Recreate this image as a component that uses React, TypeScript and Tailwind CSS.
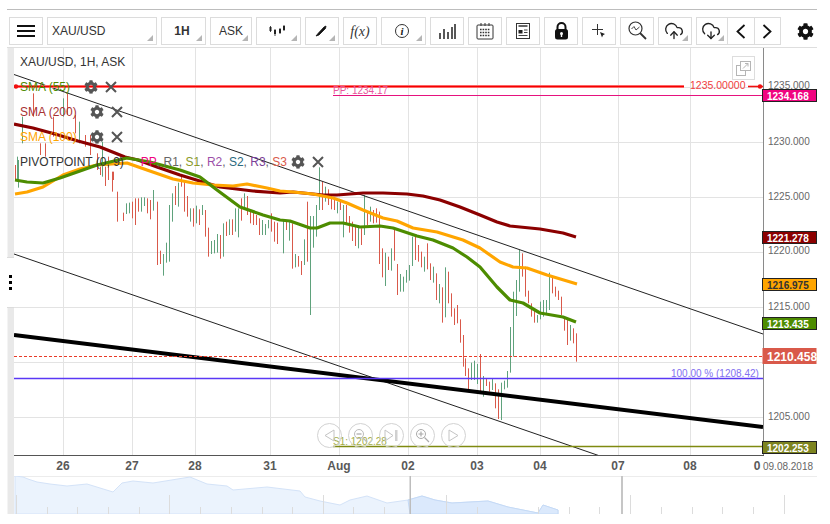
import React from "react";
import { FaCog } from "react-icons/fa";
import { CloudUpload, CloudDownload } from "lucide-react";

type C = [number, number, number, "g" | "r"];
const GREEN = "#5fa27c";
const RED = "#d9594a";

const zoomA: C[] = [[50,470,540,"g"],[65,350,430,"g"],[100,280,350,"r"],[120,430,465,"r"],[135,430,470,"r"],[160,350,410,"r"],[190,295,350,"g"],[200,280,345,"r"],[225,345,400,"r"],[237,365,430,"g"],[255,405,440,"r"],[270,405,465,"r"],[290,460,510,"r"],[305,425,490,"g"],[325,470,540,"r"],[340,515,540,"r"]];
const zoomB: C[] = [[45,15,60,"r"],[55,0,83,"g"],[300,20,45,"r"],[307,10,50,"g"],[316,20,78,"r"],[335,35,95,"r"],[352,95,185,"r"],[370,158,183,"r"],[379,130,162,"g"],[388,128,160,"g"],[397,125,175,"r"],[406,115,195,"r"],[415,115,155,"r"],[424,112,155,"g"],[433,112,138,"g"],[442,115,160,"r"],[451,120,178,"r"],[460,90,152,"g"],[470,125,315,"r"],[479,272,312,"r"],[488,282,347,"g"],[497,248,308,"g"],[506,135,305,"g"],[515,100,185,"g"],[524,78,135,"r"],[533,68,140,"g"],[542,45,80,"r"],[551,60,155,"r"],[560,108,170,"r"],[569,145,185,"g"],[578,145,200,"r"],[587,137,190,"g"],[596,148,195,"r"],[605,135,165,"g"],[614,150,230,"r"],[623,203,290,"r"],[632,243,282,"g"],[641,240,280,"g"],[650,222,278,"g"],[659,225,296,"r"],[668,190,290,"g"],[677,185,228,"r"],[686,178,225,"g"],[695,178,225,"r"],[704,145,215,"g"],[713,145,232,"g"],[722,115,182,"r"],[731,100,145,"g"],[740,108,165,"r"],[749,150,190,"r"],[758,155,195,"r"],[767,165,195,"r"],[776,175,225,"r"],[785,180,225,"g"],[794,192,225,"g"],[803,180,205,"g"],[812,160,215,"r"],[821,185,245,"r"],[830,188,252,"r"]];
const zoomC: C[] = [[8,182,280,"g"],[17,180,210,"r"],[26,180,242,"g"],[35,190,326,"r"],[44,282,322,"g"],[53,288,320,"r"],[62,303,345,"r"],[71,238,315,"g"],[80,125,305,"r"],[89,168,465,"g"],[98,168,263,"g"],[107,135,230,"g"],[116,22,150,"g"],[125,65,150,"r"],[134,80,125,"g"],[143,88,135,"r"],[152,105,148,"r"],[161,120,150,"r"],[170,125,160,"g"],[179,125,150,"r"],[188,135,232,"g"],[197,135,190,"r"],[206,168,218,"r"],[215,185,243,"r"],[224,200,258,"r"],[233,195,265,"g"],[242,205,255,"r"],[251,105,225,"g"],[260,155,195,"r"],[269,140,185,"g"],[278,150,190,"r"],[287,145,188,"r"],[296,155,312,"r"],[305,265,352,"r"],[314,278,378,"g"],[323,290,330,"r"],[332,265,332,"g"],[341,208,302,"r"],[350,312,405,"r"],[359,342,395,"g"],[368,350,395,"g"],[377,330,368,"g"],[386,315,362,"g"],[395,230,318,"g"],[404,225,300,"r"],[413,255,305,"r"],[422,275,322,"r"],[431,290,335,"g"],[440,250,328,"r"],[449,310,360,"r"],[458,320,368,"g"],[467,340,420,"r"],[476,372,430,"g"],[485,382,488,"r"],[494,322,472,"g"],[503,335,430,"r"],[512,400,470,"r"],[521,445,495,"r"],[530,435,490,"r"],[539,478,548,"r"],[548,525,620,"r"],[700,395,590,"g"],[709,360,468,"g"],[718,270,395,"g"],[727,280,350,"r"],[736,320,410,"r"],[745,392,430,"r"],[754,430,470,"r"],[763,450,488,"r"],[772,465,488,"g"],[781,425,478,"g"],[790,420,470,"g"],[799,420,465,"g"],[808,338,450,"g"],[817,350,400,"r"],[826,380,410,"r"],[835,392,420,"r"],[844,410,465,"r"],[853,468,512,"r"],[862,475,555,"r"],[871,495,542,"g"],[880,505,550,"r"],[889,520,605,"r"]];
const zoomD: C[] = [[46,55,108,"r"],[55,85,150,"r"],[64,68,120,"g"],[73,62,120,"g"],[82,72,132,"g"],[91,42,160,"r"],[100,108,170,"g"],[109,115,138,"r"],[118,125,155,"r"],[127,115,150,"g"],[136,130,205,"r"],[145,148,237,"r"],[154,128,240,"g"],[163,122,148,"g"],[172,93,143,"g"],[181,-39,98,"g"]];

const candles = [
  ...zoomA.map(([z, t, b, c]) => ({ x: z / 3, t: t / 3, b: b / 3, c })),
  ...zoomB.map(([z, t, b, c]) => ({ x: z / 3, t: 160 + t / 3, b: 160 + b / 3, c })),
  ...zoomC.map(([z, t, b, c]) => ({ x: 280 + z / 3, t: 160 + t / 3, b: 160 + b / 3, c })),
  ...zoomD.map(([z, t, b, c]) => ({ x: 450 + z / 3, t: 340 + t / 3, b: 340 + b / 3, c })),
];

const sma200 = "14,124 33,128 55,134 78,141 100,147 125,157 138,160 157,167 180,175 203,182 220,187 253,191 280,193 293,192 323,195 337,195 363,193 383,193 407,194 423,196 440,200 460,207 480,215 497,222 510,226 540,229 563,233 576,237";
const sma100 = "15,194 27,192 43,187 63,175 80,169 97,165 127,163 147,170 173,179 193,183 213,185 233,186 247,184 267,188 280,191 293,192 313,194 333,198 347,203 363,210 383,218 397,221 413,228 437,232 463,240 480,248 500,262 513,267 527,268 547,275 577,284";
const sma55 = "15,180 27,182 43,183 60,178 80,171 97,165 127,158 150,162 180,170 200,177 217,190 240,207 263,215 280,220 290,221 310,228 317,228 330,223 343,223 360,227 380,226 393,228 417,236 433,240 453,248 467,257 480,267 497,287 510,300 523,303 540,313 563,317 576,322";

const vGrid = [63, 132, 195, 270, 339, 408, 477, 540, 618, 690];
const hGrid = [87, 142, 197, 252, 307, 362, 417];
const priceLabels: [string, number][] = [["1235.000", 88.5], ["1230.000", 144.5], ["1225.000", 199.5], ["1220.000", 254], ["1215.000", 309.5], ["1205.000", 419.5]];
const dates: [string, number][] = [["26", 63], ["27", 132], ["28", 195], ["31", 270], ["Aug", 339], ["02", 408], ["03", 477], ["04", 540], ["07", 618], ["08", 690], ["0", 757]];

type Badge = { text: string; y: number; h: number; bg: string; fg: string; size: number; border: boolean };
const badges: Badge[] = [
  { text: "1234.168", y: 89.5, h: 12, bg: "#f0047f", fg: "#fff", size: 10, border: true },
  { text: "1221.278", y: 231.5, h: 12, bg: "#8b0000", fg: "#fff", size: 10, border: true },
  { text: "1216.975", y: 278.5, h: 12, bg: "#ffa500", fg: "#333", size: 10, border: true },
  { text: "1213.435", y: 317.5, h: 12, bg: "#4d8c00", fg: "#fff", size: 10, border: true },
  { text: "1210.458", y: 348, h: 16, bg: "#d9594a", fg: "#fff", size: 12, border: false },
  { text: "1202.253", y: 441.5, h: 12, bg: "#7d8420", fg: "#fff", size: 10, border: true },
];

const navProfile = [[15,476],[23,477],[28,479],[37,482],[50,484],[67,486],[87,484],[113,492],[122,483],[133,481],[153,483],[190,477],[207,484],[227,486],[233,490],[267,487],[300,491],[305,497],[320,501],[340,505],[350,500],[367,496],[387,503],[408,500],[422,496],[435,500],[452,503],[488,501],[508,507],[538,513],[543,505],[558,510]];
const navTicks: [number, number][] = [[16,495],[47,507],[77,507],[108,507],[139,507],[169,495],[200,507],[231,507],[262,507],[292,507],[323,495],[353,507],[384,507],[446,495],[477,507],[538,507],[569,507],[599,507],[630,495],[661,507],[692,507],[722,507],[753,507],[784,495]];

function Caret() {
  return <span className="absolute right-[3px] bottom-[3px] w-0 h-0 border-l-[6px] border-l-transparent border-b-[6px] border-b-[#b5b5b5]" />;
}

function Btn({ w, caret, children, className = "" }: { w: string; caret?: boolean; children: React.ReactNode; className?: string }) {
  return (
    <div className={`relative flex items-center justify-center h-[28px] border border-[#dcdcdc] shrink-0 ${w} ${className}`}>
      {children}
      {caret && <Caret />}
    </div>
  );
}

function Times({ size = 12 }: { size?: number }) {
  return (
    <svg width={size} height={size} viewBox="0 0 12 12" className="block">
      <path d="M1 1L11 11M11 1L1 11" stroke="#555" strokeWidth="2" />
    </svg>
  );
}

function Controls({ left }: { left: string }) {
  return (
    <span className={`flex items-center gap-[7px] ${left}`}>
      <FaCog size={14} color="#555" />
      <Times />
    </span>
  );
}

function RoundBtn({ children }: { children: React.ReactNode }) {
  return <div className="w-[25px] h-[25px] rounded-full border border-[#d2d2d2] flex items-center justify-center">{children}</div>;
}

export default function App() {
  const selected = navProfile.filter((p) => p[0] >= 408).map((p) => p.join(" ")).join(" L");
  return (
    <div className="relative w-[830px] h-[524px] bg-white overflow-hidden font-['Liberation_Sans',Arial,sans-serif]">
      <div className="mt-[9px] ml-[7px] w-[810px] h-px bg-[#bdbdbd]" />

      <div className="mt-[7px] ml-[9px] flex items-center gap-1 text-[#222]">
        <Btn w="w-[34px]">
          <svg width="18" height="12" viewBox="0 0 18 12"><path d="M0 1H18M0 6H18M0 11H18" stroke="#111" strokeWidth="1.8" /></svg>
        </Btn>
        <Btn w="w-[110px]" caret className="justify-start pl-[4px] text-[12px] text-[#333]">XAU/USD</Btn>
        <Btn w="w-[45px]" caret className="text-[12px] font-bold text-[#333] pr-[3px]">1H</Btn>
        <Btn w="w-[42px]" caret className="text-[12px] text-[#333]">ASK</Btn>
        <Btn w="w-[45px]" caret className="pr-[4px]">
          <svg width="18" height="12" viewBox="0 0 18 12"><path d="M2.5 1V7M7 4V11M12 3V9M16 0V6" stroke="#444" strokeWidth="1" /><path d="M2.5 2V6M7 5V9M12 4V8M16 1V5" stroke="#222" strokeWidth="2" /></svg>
        </Btn>
        <Btn w="w-[34px]" caret className="pr-[2px]">
          <svg width="12" height="12" viewBox="0 0 12 12"><path d="M1 11L3 8.5L9 2L11 1L10.5 3.5L4 10Z" fill="#111" stroke="#111" strokeWidth="0.8" /></svg>
        </Btn>
        <Btn w="w-[34px]" className="font-['Liberation_Serif',serif] italic text-[14px] text-[#333]">f(x)</Btn>
        <Btn w="w-[45px]" caret className="pr-[3px]">
          <span className="w-[14px] h-[14px] rounded-full border border-[#333] flex items-center justify-center font-['Liberation_Serif',serif] italic font-bold text-[11px] text-[#222]">i</span>
        </Btn>
        <Btn w="w-[34px]">
          <svg width="17" height="15" viewBox="0 0 17 15"><path d="M1 15V9M5 15V5M9 15V8M13 15V3M16 15V0" stroke="#222" strokeWidth="1.5" /></svg>
        </Btn>
        <Btn w="w-[34px]">
          <svg width="18" height="18" viewBox="0 0 18 18" fill="none">
            <rect x="1" y="3" width="16" height="14" rx="1" stroke="#333" strokeWidth="1" />
            <path d="M5 1V4M9 1V4M13 1V4" stroke="#333" strokeWidth="1" />
            <path d="M4 7.5H14M4 10.5H14M4 13.5H14" stroke="#333" strokeWidth="1.5" strokeDasharray="1.6 1" />
          </svg>
        </Btn>
        <Btn w="w-[34px]">
          <svg width="14" height="16" viewBox="0 0 14 16" fill="none">
            <rect x="0.5" y="0.5" width="13" height="15" stroke="#333" />
            <path d="M2.5 3H11.5" stroke="#333" strokeWidth="1.5" />
            <path d="M8 7H11.5M8 9.5H11.5M2.5 12.5H11.5" stroke="#444" />
            <rect x="2.5" y="7" width="4" height="3.5" fill="#222" />
          </svg>
        </Btn>
        <Btn w="w-[34px]">
          <svg width="15" height="18" viewBox="0 0 15 18" fill="none">
            <path d="M3.5 8V5A4 4 0 0 1 11.5 5V8" stroke="#111" strokeWidth="2" />
            <rect x="1" y="7" width="13" height="10.5" rx="2.5" fill="#111" />
            <circle cx="7.5" cy="11.5" r="1.5" fill="#fff" />
            <rect x="6.8" y="12" width="1.4" height="3" fill="#fff" />
          </svg>
        </Btn>
        <Btn w="w-[34px]">
          <svg width="18" height="18" viewBox="0 0 18 18"><path d="M2 7.5H13M7.5 2V13" stroke="#333" strokeWidth="1" /><path d="M10 10L15 12L13 13.2L12 15.5Z" fill="#222" /></svg>
        </Btn>
        <Btn w="w-[34px]">
          <svg width="19" height="19" viewBox="0 0 19 19" fill="none" className="mb-[2px]">
            <circle cx="7.5" cy="7.5" r="6.5" stroke="#333" strokeWidth="1.2" />
            <path d="M3.5 8L6 5.5L8 9L11.5 6" stroke="#444" />
            <path d="M12 12L18 18" stroke="#333" strokeWidth="1.8" />
          </svg>
        </Btn>
        <Btn w="w-[34px]" caret className="pr-[2px]">
          <CloudUpload size={20} strokeWidth={1.6} color="#222" />
        </Btn>
        <Btn w="w-[31px]" caret className="pr-[2px] border-r-0 -mr-1">
          <CloudDownload size={20} strokeWidth={1.6} color="#222" />
        </Btn>
        <div className="flex h-[28px] w-[54px] border border-[#dcdcdc] shrink-0">
          <div className="flex-1 flex items-center justify-center border-r border-[#dcdcdc]">
            <svg width="10" height="15" viewBox="0 0 10 15" fill="none"><path d="M8.5 1L1.5 7.5L8.5 14" stroke="#111" strokeWidth="1.8" /></svg>
          </div>
          <div className="flex-1 flex items-center justify-center">
            <svg width="10" height="15" viewBox="0 0 10 15" fill="none"><path d="M1.5 1L8.5 7.5L1.5 14" stroke="#111" strokeWidth="1.8" /></svg>
          </div>
        </div>
        <div className="ml-[10px] w-[20px] flex justify-center">
          <FaCog size={17} color="#111" />
        </div>
      </div>

      <div className="mt-[2px] ml-[7px] flex w-[810px] border-t border-[#dedede]">
        <div className="w-[7px] h-[466px] flex flex-col shrink-0">
          <div className="h-[209px] bg-[#e9e9e9] border-l border-[#f4f4f4]" />
          <div className="h-[51px] bg-white border-y border-[#dcdcdc] flex flex-col items-center justify-center gap-[3px] pr-[1px]">
            <span className="w-[3px] h-[3px] bg-black" />
            <span className="w-[3px] h-[3px] bg-black" />
            <span className="w-[3px] h-[3px] bg-black" />
          </div>
          <div className="flex-1 bg-[#e9e9e9] border-l border-[#f4f4f4]" />
        </div>

        <div className="flex flex-col w-[803px]">
          <div className="relative h-[428px]">
            <svg width="803" height="428" viewBox="14 48 803 428" className="block">
              <defs>
                <clipPath id="plot"><rect x="14" y="48" width="749" height="407" /></clipPath>
              </defs>
              {vGrid.map((x) => <line key={x} x1={x + 0.5} y1="48" x2={x + 0.5} y2="455" stroke="#e3e3e3" />)}
              {hGrid.map((y) => <line key={y} x1="14" y1={y + 0.5} x2="763" y2={y + 0.5} stroke="#e3e3e3" />)}
              <g clipPath="url(#plot)">
                {candles.map((k, i) => (
                  <line key={i} x1={Math.round(k.x) + 0.5} y1={k.t} x2={Math.round(k.x) + 0.5} y2={k.b} stroke={k.c === "g" ? GREEN : RED} />
                ))}
                <line x1="14" y1="74.5" x2="763" y2="334" stroke="#222" />
                <line x1="14" y1="254" x2="600" y2="456" stroke="#222" />
                <polyline points={sma200} fill="none" stroke="#8b0000" strokeWidth="3.2" strokeLinejoin="round" />
                <polyline points={sma100} fill="none" stroke="#ffa500" strokeWidth="3.2" strokeLinejoin="round" />
                <polyline points={sma55} fill="none" stroke="#4d8c00" strokeWidth="3.2" strokeLinejoin="round" />
                <line x1="14" y1="335" x2="763" y2="427" stroke="#000" strokeWidth="4" />
              </g>
              <line x1="14" y1="86.5" x2="684" y2="86.5" stroke="#ff8a8a" strokeWidth="3" />
              <line x1="14" y1="86.5" x2="684" y2="86.5" stroke="#f50000" strokeWidth="1.5" />
              <line x1="748" y1="86.5" x2="763" y2="86.5" stroke="#f01010" strokeWidth="1.6" />
              <circle cx="760" cy="86.5" r="2.2" fill="#f01010" />
              <circle cx="16" cy="86.5" r="2.2" fill="#f01010" />
              <text x="690" y="89" fontSize="10.5" fill="#f04040">1235.00000</text>
              <line x1="333" y1="95.5" x2="763" y2="95.5" stroke="#e6127e" />
              <text x="333" y="94" fontSize="10" fill="#e8559b">PP: 1234.17</text>
              <line x1="14" y1="356.5" x2="763" y2="356.5" stroke="#e83a28" strokeWidth="1.2" strokeDasharray="3 2" />
              <line x1="14" y1="378.5" x2="763" y2="378.5" stroke="#5a38f5" strokeWidth="1.4" />
              <text x="671" y="377" fontSize="10" fill="#8270f0">100.00 % (1208.42)</text>
              <line x1="333" y1="446.5" x2="763" y2="446.5" stroke="#7f8a10" strokeWidth="1.4" />
              <text x="333" y="445" fontSize="10" fill="#a3ad45">S1: 1202.28</text>

              <line x1="763.5" y1="48" x2="763.5" y2="456" stroke="#8a8a8a" />
              <line x1="14" y1="455.5" x2="764" y2="455.5" stroke="#555" strokeWidth="1.2" />

              {priceLabels.map(([t, y]) => <text key={t} x="768" y={y} fontSize="10" fill="#666">{t}</text>)}
              {badges.map((b) => (
                <g key={b.text}>
                  <rect x="762.5" y={b.y} width="54" height={b.h} fill={b.bg} stroke={b.border ? "#222" : "none"} />
                  <text x="767" y={b.y + b.h / 2 + (b.size === 12 ? 4.5 : 4)} fontSize={b.size} fontWeight="bold" fill={b.fg}>{b.text}</text>
                </g>
              ))}
              {dates.map(([t, x]) => <text key={t} x={x} y="470" fontSize="12" fontWeight="bold" fill="#595959" textAnchor="middle">{t}</text>)}
              <text x="763" y="469.5" fontSize="10" fill="#666">09.08.2018</text>
            </svg>

            <div className="absolute left-[6px] top-[1.5px] flex flex-col text-[12px] leading-none">
              <div className="h-[25px] flex items-center text-[#333]">XAU/USD, 1H, ASK</div>
              <div className="h-[25px] flex items-center text-[#4d8c00]">SMA (55)<Controls left="ml-[14px]" /></div>
              <div className="h-[25px] flex items-center text-[#a83232]">SMA (200)<Controls left="ml-[13px]" /></div>
              <div className="h-[25px] flex items-center text-[#ffa500]">SMA (100)<Controls left="ml-[13px]" /></div>
              <div className="h-[24px] flex items-center whitespace-pre text-[#333]">
                PIVOTPOINT (0, 9)<span className="ml-[17px] text-[#f0047f]">PP</span><span className="text-[#666]">, R1, </span><span className="text-[#8a9a2a]">S1</span><span className="text-[#666]">, </span><span className="text-[#9b4fa8]">R2</span><span className="text-[#666]">, </span><span className="text-[#2b6a80]">S2</span><span className="text-[#666]">, </span><span className="text-[#7b3f98]">R3</span><span className="text-[#666]">, </span><span className="text-[#d9594a]">S3</span>
                <Controls left="ml-[4px]" />
              </div>
            </div>

            <div className="absolute left-[718px] top-[8px] w-[23px] h-[24px] border border-[#ddd] bg-white flex items-center justify-center">
              <svg width="15" height="15" viewBox="0 0 15 15" fill="none">
                <rect x="0.5" y="4.5" width="9" height="10" stroke="#b5b5b5" />
                <rect x="4.5" y="0.5" width="10" height="9" fill="#fff" stroke="#b5b5b5" />
                <path d="M7 7.5L12 2.5M9 2.5H12V5.5" stroke="#b5b5b5" />
              </svg>
            </div>

            <div className="absolute left-[303px] top-[375px] flex gap-[6px]">
              <RoundBtn><svg width="11" height="13" viewBox="0 0 11 13" fill="none"><path d="M10 1V12L1 6.5Z" stroke="#c4c4c4" /></svg></RoundBtn>
              <RoundBtn><svg width="15" height="15" viewBox="0 0 15 15" fill="none"><circle cx="6" cy="6" r="4.5" stroke="#bbb" /><path d="M3.5 6H8.5M9.5 9.5L14 14" stroke="#bbb" strokeWidth="1.3" /></svg></RoundBtn>
              <RoundBtn><svg width="15" height="13" viewBox="0 0 15 13" fill="none"><path d="M1 1V12L9 6.5Z" stroke="#c4c4c4" /><rect x="11" y="1" width="2.5" height="11" fill="#d0d0d0" /></svg></RoundBtn>
              <RoundBtn><svg width="15" height="15" viewBox="0 0 15 15" fill="none"><circle cx="6" cy="6" r="4.5" stroke="#aaa" /><path d="M3.5 6H8.5M6 3.5V8.5M9.5 9.5L14 14" stroke="#aaa" strokeWidth="1.2" /></svg></RoundBtn>
              <RoundBtn><svg width="11" height="13" viewBox="0 0 11 13" fill="none"><path d="M1 1V12L10 6.5Z" stroke="#c4c4c4" /></svg></RoundBtn>
            </div>
          </div>

          <svg width="803" height="38" viewBox="14 476 803 38" className="block">
            <rect x="14" y="476" width="803" height="1" fill="#ececec" />
            <path d={`M15 514 L${navProfile.map((p) => p.join(" ")).join(" L")} L558 514 Z`} fill="#ebf3fd" stroke="#d4e3f8" />
            <path d={`M410 514 L${selected} L558 514 Z`} fill="#dbe9fc" stroke="#c5daf6" />
            {navTicks.map(([x, y]) => <line key={x} x1={x + 0.5} y1={y} x2={x + 0.5} y2="514" stroke="#dcdcdc" />)}
            <rect x="409.5" y="476" width="1.5" height="38" fill="#bdbdbd" />
            <rect x="621" y="476" width="2" height="38" fill="#c6c6c6" />
          </svg>
        </div>
      </div>
    </div>
  );
}
